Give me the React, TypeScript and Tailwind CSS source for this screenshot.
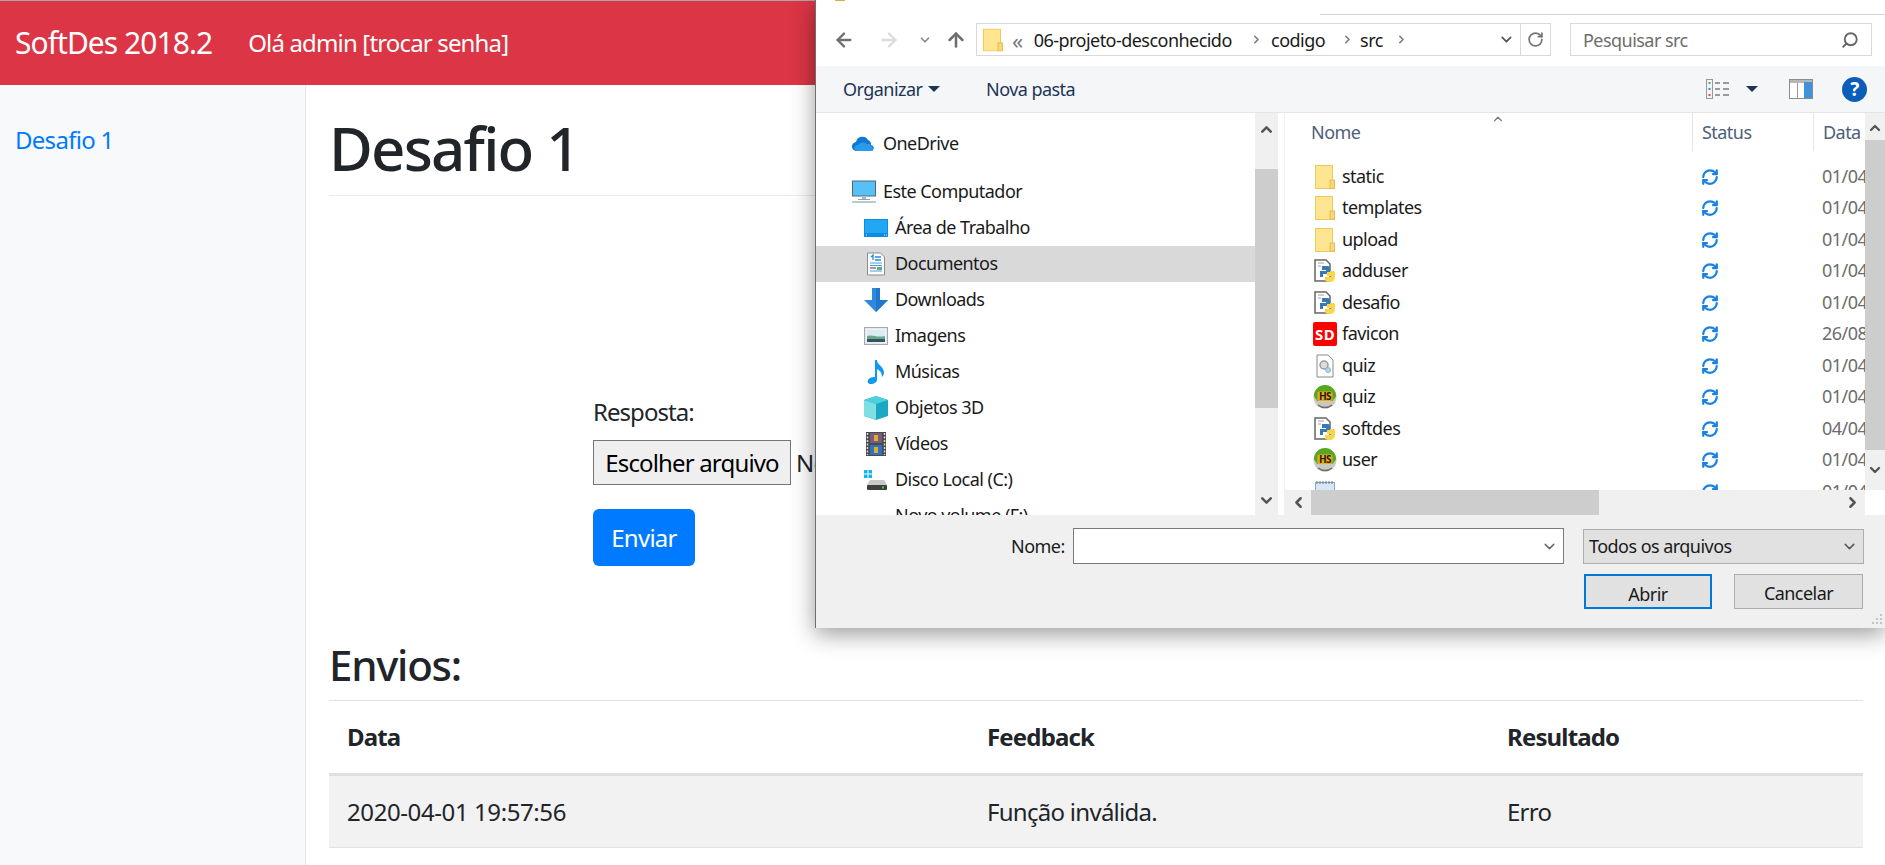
import { ArrowLeft, ArrowRight, ArrowUp, ChevronDown, ChevronLeft, ChevronRight, ChevronUp, RefreshCw, RotateCw, Search } from 'lucide-react';

function FolderIcon() {
  return (
    <svg width="20" height="24" viewBox="0 0 20 24">
      <rect x="0.5" y="0.5" width="17" height="23" fill="#fde68f" stroke="#eec95f" />
      <rect x="15" y="15" width="4.5" height="8.5" fill="#f8d775" stroke="#e3bd58" />
    </svg>
  );
}

function PythonFileIcon() {
  return (
    <svg width="22" height="24" viewBox="0 0 22 24">
      <path d="M1 1h11l4 4v17H1z" fill="#fff" stroke="#666" strokeWidth="1.5" />
      <path d="M4 4h6M4 7h3" stroke="#9aa0a6" />
      <path d="M8 7h6a2 2 0 0 1 2 2v4a2 2 0 0 1-2 2H9v3H6v-6h6v-1H8z" fill="#3a78b5" />
      <path d="M13 13h3v-1h4a2 2 0 0 1 1 2v4a5 5 0 0 1-4 5h-3a3 3 0 0 1-3-3v-2h6v-1h-4z" fill="#fbd548" />
    </svg>
  );
}

function ConfigFileIcon() {
  return (
    <svg width="20" height="24" viewBox="0 0 20 24">
      <path d="M2 1h11l5 5v17H2z" fill="#fff" stroke="#8a8a8a" />
      <circle cx="9" cy="11" r="4" fill="#dcdcdc" stroke="#9a9a9a" strokeWidth="1.5" />
      <circle cx="13" cy="16" r="2.5" fill="#b9d6ee" stroke="#8fb2ce" />
    </svg>
  );
}

function HaskellIcon() {
  return (
    <svg width="24" height="24" viewBox="0 0 24 24">
      <circle cx="12" cy="12" r="11.5" fill="#c9c9c0" />
      <path d="M1 11a11 11 0 0 1 22 0c0 2-3 3-3 5H4c0-2-3-3-3-5z" fill="#58a81f" />
      <rect x="4.5" y="6.5" width="15" height="9.5" rx="1.5" fill="#eda91f" />
      <text x="12" y="14.5" textAnchor="middle" fontSize="10" fontWeight="700" fill="#20200a" fontFamily="Noto Sans, sans-serif">
        HS
      </text>
      <path d="M5 20a11 11 0 0 0 14 0" fill="none" stroke="#6f6f6a" strokeWidth="1.5" />
    </svg>
  );
}

function NotepadIcon() {
  return (
    <svg width="20" height="24" viewBox="0 0 20 24">
      <rect x="0.5" y="2.5" width="19" height="21" fill="#d6e8f5" stroke="#8aa8bf" />
      <path d="M2 1v3M5 1v3M8 1v3M11 1v3M14 1v3M17 1v3" stroke="#6c7a85" />
    </svg>
  );
}

function FaviconIcon() {
  return (
    <span className="flex h-[24px] w-[24px] items-center justify-center rounded-[2px] bg-[#fe0000] text-[15px] leading-none font-bold tracking-[0.02em] text-white">
      SD
    </span>
  );
}

function OneDriveIcon() {
  return (
    <svg width="24" height="16" viewBox="0 0 24 16">
      <path d="M5 15a4.500 4.500 0 0 1-1-9 6.500 6.500 0 0 1 12-2 5 5 0 0 1 3 5 3.200 3.200 0 0 1 1 6z" fill="#0f78d4" />
      <path d="M5 15a3 3 0 0 1 1-6 6 6 0 0 1 9-1 4 4 0 0 1 5 3 2.500 2.500 0 0 1 0 4z" fill="#2a9be8" />
    </svg>
  );
}

function ComputerIcon() {
  return (
    <svg width="24" height="24" viewBox="0 0 24 24">
      <rect x="0.5" y="1" width="23" height="15" fill="#58c0f5" stroke="#4a6a80" />
      <rect x="10" y="16" width="4" height="3" fill="#a9b8c4" />
      <rect x="6" y="19" width="12" height="1" fill="#8ea3b2" />
      <rect x="0" y="21" width="24" height="2" fill="#b9c8d3" />
    </svg>
  );
}

function DesktopIcon() {
  return (
    <svg width="24" height="18" viewBox="0 0 24 18">
      <rect width="24" height="18" fill="#0d8ce0" />
      <rect x="1" y="1" width="22" height="13" fill="#20a8f5" />
      <path d="M2 16h1M20 16h1M22 16h1" stroke="#d6efff" />
    </svg>
  );
}

function DocumentsIcon() {
  return (
    <svg width="20" height="24" viewBox="0 0 20 24">
      <path d="M1.500 1h13l4 4v18h-17z" fill="#fff" stroke="#8d8d8d" />
      <path d="M5 5l2-2v5M9 5h6M9 8h6" stroke="#2a8ad8" strokeWidth="1.3" fill="none" />
      <path d="M4 11h12M4 13.500h12M4 19h12" stroke="#4d9ad6" />
      <path d="M4 16h6" stroke="#7a7a7a" strokeWidth="1.5" />
      <rect x="11" y="15" width="5" height="3" fill="#5fae8a" />
    </svg>
  );
}

function DownloadsIcon() {
  return (
    <svg width="24" height="24" viewBox="0 0 24 24">
      <path d="M8 0h8v12h8L12 24 0 12h8z" fill="#2f8ade" />
      <path d="M12 0h4v12h8L12 24z" fill="#1e78cc" />
    </svg>
  );
}

function PicturesIcon() {
  return (
    <svg width="24" height="18" viewBox="0 0 24 18">
      <rect x="0.5" y="0.5" width="23" height="17" fill="#eef1f3" stroke="#a9a9a9" strokeWidth="1.2" />
      <rect x="3" y="3" width="18" height="12" fill="#d8ecf2" />
      <path d="M3 9c5-2 10 2 18 0v6H3z" fill="#6fa58e" />
      <path d="M3 12h18v3H3z" fill="#2f5560" />
    </svg>
  );
}

function MusicIcon() {
  return (
    <svg width="20" height="24" viewBox="0 0 20 24">
      <path d="M9 0h2c0 5 7 6 7 13 0 1-1 3-2 4 0-5-3-7-5-8v11c0 2-3 4-6 4s-4-2-3-4 3-3 7-3z" fill="#0d9af0" />
    </svg>
  );
}

function CubeIcon() {
  return (
    <svg width="24" height="24" viewBox="0 0 24 24">
      <path d="M12 0l12 4v16l-12 4L0 20V4z" fill="#1ba8c4" />
      <path d="M0 4l12 4v16L0 20z" fill="#7fe0e4" />
      <path d="M12 0l12 4-12 4L0 4z" fill="#4dd0de" />
    </svg>
  );
}

function FilmIcon() {
  return (
    <svg width="20" height="24" viewBox="0 0 20 24">
      <rect width="20" height="24" fill="#4a4a4a" />
      <path d="M1.500 1v22M18.500 1v22" stroke="#d8d8d8" strokeWidth="1.500" strokeDasharray="2 1.500" />
      <rect x="4" y="1" width="12" height="10" fill="#7a5a80" />
      <rect x="4" y="13" width="12" height="10" fill="#2f72c4" />
      <path d="M8 3h4v6H8zM8 15h4v6H8z" fill="#e0b020" />
    </svg>
  );
}

function DiskIcon() {
  return (
    <svg width="24" height="21" viewBox="0 0 24 21">
      <path d="M0 0h3.500v3.500H0zM4.500 0H8v3.500H4.500zM0 4.500h3.500V8H0zM4.500 4.500H8V8H4.500z" fill="#14b4ee" />
      <path d="M6 10h14l3 5H3z" fill="#c8c8c8" />
      <rect x="3" y="15" width="20" height="5" rx="1" fill="#3f3f3f" />
      <rect x="18" y="16.500" width="2" height="2" fill="#4cd04c" />
    </svg>
  );
}

function ViewIcon() {
  return (
    <svg width="24" height="20" viewBox="0 0 24 20">
      <rect x="0.500" y="0.500" width="6" height="19" fill="#f3f3f3" stroke="#9a9a9a" />
      <rect x="2.500" y="3" width="2" height="2" fill="#6aa06a" />
      <rect x="2.500" y="9" width="2" height="2" fill="#3a8ad8" />
      <rect x="2.500" y="15" width="2" height="2" fill="#e05050" />
      <path d="M9 4h5M17 4h6M9 10h5M17 10h6M9 16h5M17 16h6" stroke="#7d7d7d" strokeWidth="1.300" />
    </svg>
  );
}

function PreviewPaneIcon() {
  return (
    <svg width="24" height="20" viewBox="0 0 24 20">
      <rect x="0.500" y="0.500" width="23" height="19" fill="#fff" stroke="#8c8c8c" />
      <rect x="1" y="1" width="22" height="3" fill="#b8b8b8" />
      <rect x="8" y="4" width="1" height="15" fill="#9a9a9a" />
      <rect x="15" y="3" width="8" height="16" fill="#3f92dc" />
    </svg>
  );
}

function HelpIcon() {
  return (
    <span className="flex h-[25px] w-[25px] items-center justify-center rounded-full bg-[#0a5db8] text-[19px] leading-none font-bold text-white">
      ?
    </span>
  );
}

function Caret() {
  return <span className="h-0 w-0 border-x-[6px] border-t-[6px] border-x-transparent border-t-[#1c3557]" />;
}

const navItems = [
  { label: 'Área de Trabalho', icon: <DesktopIcon /> },
  { label: 'Documentos', icon: <DocumentsIcon />, selected: true },
  { label: 'Downloads', icon: <DownloadsIcon /> },
  { label: 'Imagens', icon: <PicturesIcon /> },
  { label: 'Músicas', icon: <MusicIcon /> },
  { label: 'Objetos 3D', icon: <CubeIcon /> },
  { label: 'Vídeos', icon: <FilmIcon /> },
  { label: 'Disco Local (C:)', icon: <DiskIcon /> },
  { label: 'Novo volume (F:)', icon: null },
];

const files = [
  { name: 'static', date: '01/04/2020', icon: <FolderIcon /> },
  { name: 'templates', date: '01/04/2020', icon: <FolderIcon /> },
  { name: 'upload', date: '01/04/2020', icon: <FolderIcon /> },
  { name: 'adduser', date: '01/04/2020', icon: <PythonFileIcon /> },
  { name: 'desafio', date: '01/04/2020', icon: <PythonFileIcon /> },
  { name: 'favicon', date: '26/08/2018', icon: <FaviconIcon /> },
  { name: 'quiz', date: '01/04/2020', icon: <ConfigFileIcon /> },
  { name: 'quiz', date: '01/04/2020', icon: <HaskellIcon /> },
  { name: 'softdes', date: '04/04/2020', icon: <PythonFileIcon /> },
  { name: 'user', date: '01/04/2020', icon: <HaskellIcon /> },
  { name: '', date: '01/04/2020', icon: <NotepadIcon /> },
];

function FileDialog() {
  return (
    <div className="absolute top-0 left-[815px] flex h-[628px] w-[1070px] flex-col border-l border-[#6e6e6e] bg-white text-[18px] tracking-[-0.03em] text-[#1a1a1a] shadow-[0_6px_22px_rgba(0,0,0,0.4)]">
      {/* Title strip */}
      <div className="relative h-[23px] shrink-0">
        <span className="absolute top-0 left-[19px] h-[1px] w-[10px] bg-[#d8b040]" />
        <span className="absolute top-[14px] right-0 h-[1px] w-[565px] bg-[#d5d5d5]" />
      </div>

      {/* Address row */}
      <div className="flex h-[33px] shrink-0 items-center">
        <ArrowLeft size={22} strokeWidth={2.5} className="ml-[17px] text-[#6f6f6f]" />
        <ArrowRight size={22} strokeWidth={2.5} className="ml-[23px] text-[#dcdcdc]" />
        <ChevronDown size={14} strokeWidth={3} className="ml-[18px] text-[#8a8a8a]" />
        <ArrowUp size={22} strokeWidth={2.8} className="ml-[13px] text-[#6f6f6f]" />
        <div className="ml-[9px] flex h-[33px] w-[575px] items-center border border-[#d9d9d9]">
          <span className="ml-[6px] flex scale-y-[0.95]">
            <FolderIcon />
          </span>
          <span className="ml-[9px] w-[22px] text-[22px] leading-none text-[#777]">«</span>
          <span className="w-[219px]">06-projeto-desconhecido</span>
          <ChevronRight size={13} strokeWidth={3} className="text-[#7a7a7a]" />
          <span className="ml-[8px] w-[71px]">codigo</span>
          <ChevronRight size={13} strokeWidth={3} className="text-[#7a7a7a]" />
          <span className="ml-[6px] w-[35px]">src</span>
          <ChevronRight size={13} strokeWidth={3} className="text-[#7a7a7a]" />
          <ChevronDown size={17} strokeWidth={2.5} className="ml-[90px] text-[#555]" />
          <span className="ml-[6px] flex h-full w-[30px] items-center justify-center border-l border-[#d9d9d9]">
            <RotateCw size={17} strokeWidth={2.5} className="text-[#777]" />
          </span>
        </div>
        <div className="ml-[19px] flex h-[33px] w-[302px] items-center justify-between border border-[#d9d9d9] pr-[12px] pl-[12px]">
          <span className="text-[#6d6d6d]">Pesquisar src</span>
          <Search size={18} strokeWidth={2.5} className="-scale-x-100 text-[#666]" />
        </div>
      </div>

      {/* Command bar */}
      <div className="mt-[10px] flex h-[47px] shrink-0 items-center border-b border-[#e5e5e5] bg-[#f5f6f7] text-[#1c3557]">
        <span className="ml-[27px] w-[80px]">Organizar</span>
        <span className="ml-[5px] flex">
          <Caret />
        </span>
        <span className="ml-[46px] w-[92px]">Nova pasta</span>
        <span className="ml-[628px] flex">
          <ViewIcon />
        </span>
        <span className="ml-[16px] flex">
          <Caret />
        </span>
        <span className="ml-[31px] flex">
          <PreviewPaneIcon />
        </span>
        <span className="ml-[29px] flex">
          <HelpIcon />
        </span>
      </div>

      {/* Panes */}
      <div className="flex h-[402px] shrink-0">
        <div className="w-[439px] shrink-0 overflow-hidden pt-[13px]">
          <div className="flex h-[36px] items-center pl-[36px]">
            <span className="flex w-[24px] justify-center">
              <OneDriveIcon />
            </span>
            <span className="ml-[7px] pb-[2px]">OneDrive</span>
          </div>
          <div className="mt-[12px] flex h-[36px] items-center pl-[36px]">
            <span className="flex w-[24px] justify-center">
              <ComputerIcon />
            </span>
            <span className="ml-[7px] pb-[2px]">Este Computador</span>
          </div>
          {navItems.map((item) => (
            <div key={item.label} className={`flex h-[36px] items-center pl-[48px] ${item.selected ? 'bg-[#d9d9d9]' : ''}`}>
              <span className="flex w-[24px] justify-center">{item.icon}</span>
              <span className="ml-[7px] pb-[2px]">{item.label}</span>
            </div>
          ))}
        </div>

        <div className="flex w-[23px] shrink-0 flex-col bg-[#f0f0f0] text-[#555]">
          <div className="flex h-[56px] justify-center pt-[8px]">
            <ChevronUp size={17} strokeWidth={3.5} />
          </div>
          <div className="h-[239px] bg-[#cdcdcd]" />
          <div className="flex flex-1 items-end justify-center pb-[6px]">
            <ChevronDown size={17} strokeWidth={3.5} />
          </div>
        </div>

        <div className="relative ml-[6px] flex w-[581px] shrink-0 flex-col overflow-hidden border-l border-[#f0f0f0]">
          <ChevronUp size={14} className="absolute top-[-1px] left-[206px] text-[#777]" />
          <div className="flex h-[38px] shrink-0 whitespace-nowrap text-[#4c607a]">
            <div className="flex w-[407px] items-center pl-[26px]">Nome</div>
            <div className="flex w-[121px] items-center border-l border-[#e5e5e5] pl-[9px]">Status</div>
            <div className="flex flex-1 items-center overflow-hidden border-l border-[#e5e5e5] pl-[9px]">Data de modificação</div>
          </div>
          <div className="h-[339px] overflow-hidden pt-[10px]">
            {files.map((file, i) => (
              <div key={i} className="flex h-[31.5px] items-center whitespace-nowrap">
                <span className="ml-[28px] flex w-[24px] shrink-0 justify-center">{file.icon}</span>
                <span className="ml-[5px] w-[359px] shrink-0 pb-[2px]">{file.name}</span>
                <RefreshCw size={18} strokeWidth={3} className="shrink-0 text-[#1a82e0]" />
                <span className="ml-[103px] shrink-0 pb-[2px] text-[#6d6d6d]">{file.date}</span>
              </div>
            ))}
          </div>
          <div className="flex h-[25px] shrink-0 items-center bg-[#f0f0f0] text-[#555]">
            <span className="flex w-[26px] justify-center">
              <ChevronLeft size={17} strokeWidth={3.5} />
            </span>
            <span className="h-full w-[288px] bg-[#cdcdcd]" />
            <span className="ml-auto flex w-[26px] justify-center">
              <ChevronRight size={17} strokeWidth={3.5} />
            </span>
          </div>
        </div>

        <div className="flex h-[377px] w-[20px] shrink-0 flex-col bg-[#f0f0f0] text-[#555]">
          <div className="flex h-[27px] justify-center pt-[7px]">
            <ChevronUp size={16} strokeWidth={3.5} />
          </div>
          <div className="h-[310px] bg-[#cdcdcd]" />
          <div className="flex flex-1 items-center justify-center">
            <ChevronDown size={16} strokeWidth={3.5} />
          </div>
        </div>
      </div>

      {/* Footer */}
      <div className="relative flex-1 bg-[#f0f0f0] pt-[13px]">
        <div className="flex items-center">
          <span className="ml-[195px] w-[54px]">Nome:</span>
          <div className="ml-[8px] flex h-[36px] w-[491px] items-center justify-end border border-[#7a7a7a] bg-white pr-[5px]">
            <ChevronDown size={17} className="text-[#666]" />
          </div>
          <div className="ml-[19px] flex h-[35px] w-[281px] items-center justify-between border border-[#adadad] bg-[#e1e1e1] pr-[5px] pl-[5px]">
            <span>Todos os arquivos</span>
            <ChevronDown size={17} className="text-[#555]" />
          </div>
        </div>
        <div className="mt-[10px] flex">
          <button className="ml-[768px] h-[35px] w-[128px] border-2 border-[#0078d7] bg-[#e1e1e1] text-center">Abrir</button>
          <button className="ml-[22px] h-[35px] w-[129px] border border-[#adadad] bg-[#e1e1e1] text-center">Cancelar</button>
        </div>
        <svg width="14" height="14" viewBox="0 0 14 14" className="absolute right-[2px] bottom-[1px]">
          <path d="M11 1h2v2h-2zM7 5h2v2H7zM11 5h2v2h-2zM3 9h2v2H3zM7 9h2v2H7zM11 9h2v2h-2z" fill="#c4c4c4" />
        </svg>
      </div>
    </div>
  );
}

export default function App() {
  return (
    <div className="relative h-[865px] overflow-hidden bg-white font-['Noto_Sans',sans-serif] text-[24px] leading-[36px] text-[#212529]">
      {/* Navbar */}
      <div className="flex h-[85px] items-center border-t border-[#a8a8a8] bg-[#dc3545] text-white">
        <span className="ml-[15px] text-[30px] tracking-[-0.032em]">SoftDes 2018.2</span>
        <span className="ml-[36px] tracking-[-0.035em]">Olá admin [trocar senha]</span>
      </div>

      <div className="flex h-[780px]">
        {/* Sidebar */}
        <div className="w-[306px] shrink-0 border-r border-[#e9e9e9] bg-[#f8f9fa] pt-[37px] pl-[15px]">
          <a className="tracking-[-0.03em] text-[#007bff]">Desafio 1</a>
        </div>

        {/* Main */}
        <div className="flex-1 pr-[22px] pl-[23px]">
          <h1 className="border-b border-[#e9ecef] pt-[27px] pb-[11px] text-[60px] leading-[72px] font-medium tracking-[-0.03em]">Desafio 1</h1>

          <form className="mt-[198px] ml-[264px]">
            <label className="block tracking-[-0.04em]">Resposta:</label>
            <div className="mt-[10px] flex items-center whitespace-nowrap">
              <button type="button" className="h-[45px] w-[198px] border border-[#767676] bg-[#efefef] text-center tracking-[-0.035em] text-black">
                Escolher arquivo
              </button>
              <span className="ml-[5px] tracking-[-0.03em]">Nenhum arquivo selecionado</span>
            </div>
            <button type="button" className="mt-[24px] h-[57px] w-[102px] rounded-[6px] bg-[#007bff] text-center tracking-[-0.03em] text-white">
              Enviar
            </button>
          </form>

          <h3 className="mt-[74px] pb-[10px] text-[42px] leading-[50px] font-medium tracking-[-0.03em]">Envios:</h3>

          <table className="w-full border-t border-[#dee2e6] text-left tracking-[-0.03em]">
            <thead>
              <tr className="border-b-[3px] border-[#dee2e6]">
                <th className="h-[74px] w-[640px] pl-[18px] font-bold tracking-[-0.035em]">Data</th>
                <th className="h-[74px] w-[520px] pl-[18px] font-bold tracking-[-0.035em]">Feedback</th>
                <th className="h-[74px] pl-[18px] font-bold tracking-[-0.035em]">Resultado</th>
              </tr>
            </thead>
            <tbody>
              <tr className="border-b border-[#dee2e6] bg-[#f2f2f2]">
                <td className="h-[73px] pl-[18px] tracking-[-0.017em]">2020-04-01 19:57:56</td>
                <td className="h-[73px] pl-[18px]">Função inválida.</td>
                <td className="h-[73px] pl-[18px]">Erro</td>
              </tr>
            </tbody>
          </table>
        </div>
      </div>

      <FileDialog />
    </div>
  );
}
